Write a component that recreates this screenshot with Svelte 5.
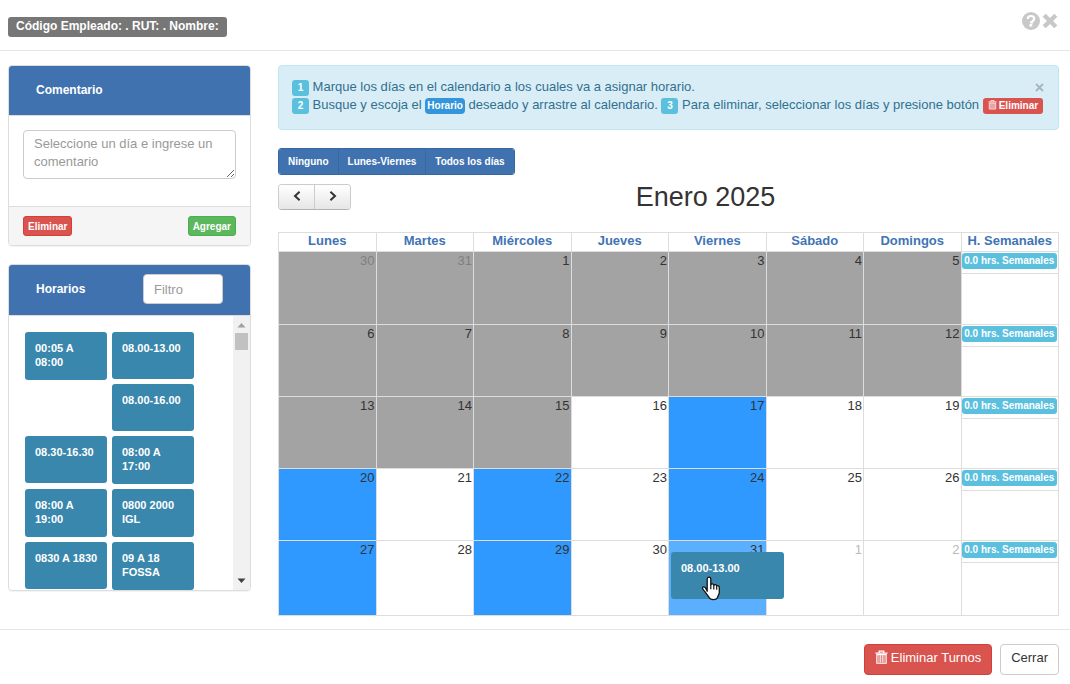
<script>
  const shifts = [
    '00:05 A 08:00', '08.00-13.00', '08.00-16.00', '08.30-16.30', '08:00 A 17:00',
    '08:00 A 19:00', '0800 2000 IGL', '0830 A 1830', '09 A 18 FOSSA'
  ];
  const dayNames = ['Lunes', 'Martes', 'Miércoles', 'Jueves', 'Viernes', 'Sábado', 'Domingos', 'H. Semanales'];
  const selected = [17, 20, 22, 24, 27, 29, 31];

  const weeks = Array.from({ length: 5 }, (_, w) =>
    Array.from({ length: 7 }, (_, d) => {
      const n = w * 7 + d - 1;
      const day = n < 1 ? n + 31 : n > 31 ? n - 31 : n;
      const outside = n < 1 || n > 31;
      return {
        day,
        outside,
        past: n < 16,
        selected: !outside && selected.includes(day),
        target: !outside && day === 31
      };
    })
  );
</script>

{#snippet trash()}
  <svg class="trash" viewBox="0 0 14 15" aria-hidden="true">
    <path d="M4.5 2V.7h5V2M.5 2.7h13M2 4.5h10v9.2H2z" fill="none" stroke="currentColor" stroke-width="1.3" />
    <path d="M4.3 5v8M6.1 5v8M7.9 5v8M9.7 5v8" stroke="currentColor" stroke-width="1" />
  </svg>
{/snippet}

<div class="modal">
  <header class="top">
    <span class="employee">Código Empleado: . RUT: . Nombre:</span>
    <div class="tools">
      <button class="plain" aria-label="Ayuda">
        <svg width="18" height="18" viewBox="0 0 18 18">
          <circle cx="9" cy="9" r="9" fill="#c8c8c8" />
          <path d="M5.8 6.9C5.8 4.8 7.2 4 9 4s3.2 1 3.2 2.7c0 2-2.2 1.9-2.2 3.6H8.1" fill="none" stroke="#fff" stroke-width="2.2" />
          <rect x="7.5" y="12" width="2.8" height="2.6" fill="#fff" />
        </svg>
      </button>
      <button class="plain" aria-label="Cerrar ventana">
        <svg width="16" height="16" viewBox="0 0 16 16">
          <path d="M2.2 2.2l11.6 11.6M13.8 2.2L2.2 13.8" stroke="#c8c8c8" stroke-width="4.4" />
        </svg>
      </button>
    </div>
  </header>

  <main class="content">
    <aside>
      <section class="panel">
        <div class="panel-head"><label for="comment">Comentario</label></div>
        <div class="comment-body">
          <textarea id="comment" placeholder="Seleccione un día e ingrese un comentario"></textarea>
        </div>
        <div class="panel-foot">
          <button class="small danger">Eliminar</button>
          <button class="small success">Agregar</button>
        </div>
      </section>

      <section class="panel">
        <div class="panel-head with-filter">
          <label for="filter">Horarios</label>
          <input id="filter" type="text" placeholder="Filtro" />
        </div>
        <div class="shift-body">
          <div class="shifts">
            {#each shifts as shift}
              <div class="shift">{shift}</div>
            {/each}
          </div>
          <div class="scroll" aria-hidden="true">
            <svg width="9" height="5" viewBox="0 0 9 5"><path d="M4.5 0L8.5 4.5h-8z" fill="#a0a0a0" /></svg>
            <div class="thumb"></div>
            <svg width="9" height="5" viewBox="0 0 9 5"><path d="M4.5 5L8.5 .5h-8z" fill="#404040" /></svg>
          </div>
        </div>
      </section>
    </aside>

    <section class="schedule">
      <div class="alert">
        <div class="step">
          <span><span class="tag num">1</span> Marque los días en el calendario a los cuales va a asignar horario.</span>
          <button class="plain" aria-label="Cerrar aviso">
            <svg width="9" height="9" viewBox="0 0 9 9"><path d="M1 1l7 7M8 1L1 8" stroke="#a5b6be" stroke-width="1.8" /></svg>
          </button>
        </div>
        <div>
          <span class="tag num">2</span> Busque y escoja el <span class="tag word">Horario</span> deseado y arrastre al calendario.
          <span class="tag num">3</span> Para eliminar, seleccionar los días y presione botón
          <span class="tag remove">{@render trash()}Eliminar</span>
        </div>
      </div>

      <div class="group">
        <button>Ninguno</button>
        <button>Lunes-Viernes</button>
        <button>Todos los días</button>
      </div>

      <div class="calendar-bar">
        <div class="nav">
          <button aria-label="Mes anterior">
            <svg width="8" height="10" viewBox="0 0 8 10"><path d="M6.6 .8L2 5l4.6 4.2" fill="none" stroke="#333" stroke-width="2" /></svg>
          </button>
          <button aria-label="Mes siguiente">
            <svg width="8" height="10" viewBox="0 0 8 10"><path d="M1.4 .8L6 5 1.4 9.2" fill="none" stroke="#333" stroke-width="2" /></svg>
          </button>
        </div>
        <h2>Enero 2025</h2>
        <span></span>
      </div>

      <table>
        <thead>
          <tr>{#each dayNames as name}<th>{name}</th>{/each}</tr>
        </thead>
        <tbody>
          {#each weeks as week}
            <tr>
              {#each week as c}
                <td class:past={c.past} class:outside={c.outside} class:selected={c.selected} class:target={c.target}>
                  {c.day}
                  {#if c.target}
                    <div class="shift dragged">
                      08.00-13.00
                      <svg class="pointer" width="20" height="25" viewBox="0 0 20 25" aria-hidden="true">
                        <path
                          d="M6.2 15.2V3.2c0-2.8 3.6-2.8 3.6 0v5.6c.6-1.4 2.9-1.1 3 .5.7-1.1 2.7-.8 2.9.8.8-.8 2.6-.3 2.6 1.3v4.8c0 2.4-1.6 3.6-1.8 5.2-.8 2.8-7.2 2.8-8.4.2-1-2.1-2.9-4-4.6-6.4-.6-1-2.1-2.1-2.1-3.1.2-1.6 2-1.6 3-.5z"
                          fill="#fff" stroke="#111" stroke-width="1.3" stroke-linejoin="round" />
                        <path d="M9.8 8.8v4.4M12.8 9.4v4M15.7 10.2v3.6" stroke="#111" stroke-width="1.2" />
                      </svg>
                    </div>
                  {/if}
                </td>
              {/each}
              <td class="total"><div><span class="tag hours">0.0 hrs. Semanales</span></div></td>
            </tr>
          {/each}
        </tbody>
      </table>
    </section>
  </main>

  <footer>
    <button class="large danger">{@render trash()}Eliminar Turnos</button>
    <button class="large default">Cerrar</button>
  </footer>
</div>

<style>
  :global(body) {
    background: #fff;
  }
  .modal,
  .modal :is(button, input, textarea) {
    font-family: 'Liberation Sans', Arial, sans-serif;
  }
  .modal {
    font-size: 13px;
    line-height: 18px;
    color: #333;
  }
  .modal * {
    box-sizing: border-box;
  }
  button {
    margin: 0;
    cursor: pointer;
  }
  .plain {
    display: flex;
    padding: 0;
    border: 0;
    background: none;
  }
  .top {
    display: flex;
    justify-content: space-between;
    align-items: flex-start;
    height: 51px;
    padding: 12px 12px 0 8px;
    border-bottom: 1px solid #e5e5e5;
  }
  .employee {
    margin-top: 5px;
    padding: 0 8px 2px;
    border-radius: 3px;
    background: #777;
    color: #fff;
    font-size: 12px;
    font-weight: bold;
  }
  .tools {
    display: flex;
    align-items: center;
    gap: 2px;
  }
  .content {
    display: grid;
    grid-template-columns: 243px minmax(0, 1fr);
    gap: 27px;
    padding: 14px 11px 13px 8px;
  }
  .panel {
    margin-bottom: 18px;
    border: 1px solid #ddd;
    border-radius: 4px;
    overflow: hidden;
    box-shadow: 0 1px 1px rgba(0, 0, 0, 0.05);
  }
  .panel:last-child {
    margin-bottom: 0;
  }
  .panel-head {
    display: flex;
    justify-content: space-between;
    align-items: center;
    height: 50px;
    padding: 0 27px 2px;
    border-bottom: 1px solid #ddd;
    background: #4072b0;
    color: #fff;
    font-size: 12px;
    font-weight: bold;
  }
  .with-filter {
    height: 51px;
  }
  input,
  textarea {
    border: 1px solid #ccc;
    border-radius: 4px;
    padding: 4px 10px;
    font-size: 13px;
    line-height: 18px;
    color: #555;
  }
  ::placeholder {
    color: #999;
    opacity: 1;
  }
  input {
    width: 80px;
    height: 30px;
  }
  .comment-body {
    height: 90px;
    padding: 14px;
  }
  textarea {
    display: block;
    width: 100%;
    height: 49px;
    resize: vertical;
    overflow: hidden;
  }
  .panel-foot {
    display: flex;
    justify-content: space-between;
    padding: 9px 14px;
    border-top: 1px solid #ddd;
    background: #f5f5f5;
  }
  .small {
    height: 20px;
    padding: 0 4px;
    border: 1px solid;
    border-radius: 3px;
    color: #fff;
    font-size: 10px;
    font-weight: bold;
  }
  .danger {
    background: #d9534f;
    border-color: #d43f3a;
    color: #fff;
  }
  .success {
    background: #5cb85c;
    border-color: #4cae4c;
  }
  .shift-body {
    display: flex;
    height: 274px;
  }
  .shifts {
    flex: 1;
    padding: 16px 16px 0;
    overflow: hidden;
  }
  .shift {
    float: left;
    width: 82px;
    min-height: 47px;
    margin: 0 5px 5px 0;
    padding: 9px 8px 11px 10px;
    border-radius: 3px;
    background: #3a87ad;
    color: #fff;
    font-size: 11px;
    font-weight: bold;
    line-height: 14px;
    cursor: pointer;
  }
  .scroll {
    display: flex;
    flex-direction: column;
    align-items: center;
    width: 17px;
    padding: 7px 0;
    background: #f1f1f1;
  }
  .thumb {
    width: 13px;
    height: 17px;
    margin: 5px 0 auto;
    background: #c1c1c1;
  }
  .schedule {
    min-width: 0;
  }
  .alert {
    height: 65px;
    padding: 12px 14px 0 13px;
    border: 1px solid #bce8f1;
    border-radius: 4px;
    background: #d9edf7;
    color: #31708f;
    white-space: nowrap;
  }
  .step {
    display: flex;
    justify-content: space-between;
    align-items: center;
  }
  .tag {
    display: inline-block;
    height: 16px;
    border-radius: 3px;
    background: #5bc0de;
    color: #fff;
    font-size: 10px;
    font-weight: bold;
    line-height: 16px;
    text-align: center;
    vertical-align: middle;
  }
  .num {
    width: 17px;
  }
  .word {
    padding: 0 2px;
    border-radius: 4px;
    background: #3395db;
  }
  .remove {
    padding: 0 5px;
    background: #d9534f;
  }
  .remove .trash {
    width: 9px;
    height: 10px;
    margin-right: 2px;
    vertical-align: -1px;
  }
  .group {
    display: flex;
    width: fit-content;
    margin: 18px 0 9px;
    border: 1px solid #35699f;
    border-radius: 3px;
    overflow: hidden;
  }
  .group button {
    height: 25px;
    padding: 0 9px;
    border: 0;
    background: #4072b0;
    color: #fff;
    font-size: 10px;
    font-weight: bold;
  }
  .group button + button {
    border-left: 1px solid #35699f;
  }
  .calendar-bar {
    display: grid;
    grid-template-columns: 1fr auto 1fr;
    margin-bottom: 22px;
    height: 26px;
  }
  .nav {
    display: flex;
    justify-self: start;
    width: 73px;
    border: 1px solid #ccc;
    border-bottom-color: #b3b3b3;
    border-radius: 4px;
    overflow: hidden;
  }
  .nav button {
    display: flex;
    flex: 1;
    align-items: center;
    justify-content: center;
    padding: 0 0 2px;
    border: 0;
    background: linear-gradient(#fff, #e6e6e6);
  }
  .nav button + button {
    border-left: 1px solid #ccc;
  }
  h2 {
    margin: 0;
    padding-left: 74px;
    font-size: 27px;
    font-weight: normal;
    line-height: 26px;
  }
  table {
    width: 100%;
    border-collapse: collapse;
    table-layout: fixed;
  }
  th,
  td {
    border: 1px solid #ddd;
    vertical-align: top;
  }
  th {
    height: 19px;
    padding: 0;
    color: #3f74b5;
    font-size: 13px;
    line-height: 16px;
  }
  td {
    height: 72px;
    padding: 0 1px;
    text-align: right;
  }
  tr:first-child td {
    height: 73px;
  }
  tr:last-child td {
    height: 75px;
  }
  .outside {
    color: #b9b9b9;
  }
  .past {
    background: #a3a3a3;
  }
  .past.outside {
    color: #808080;
  }
  .selected {
    background: #3099ff;
  }
  .target {
    position: relative;
    background: #5ab0ff;
  }
  .dragged {
    position: absolute;
    z-index: 1;
    top: 11px;
    left: 2px;
    width: 113px;
    margin: 0;
    text-align: left;
  }
  .pointer {
    position: absolute;
    top: 24px;
    left: 30px;
  }
  .total {
    padding: 0;
  }
  .total div {
    height: 22px;
    padding-top: 1px;
    border-bottom: 1px solid #ddd;
    line-height: 16px;
  }
  .hours {
    display: block;
    margin-right: 1px;
  }
  footer {
    display: flex;
    justify-content: flex-end;
    gap: 8px;
    padding: 14px 11px 9px;
    border-top: 1px solid #e5e5e5;
  }
  .large {
    display: flex;
    align-items: center;
    height: 31px;
    padding: 0 10px 4px;
    border: 1px solid #d43f3a;
    border-radius: 4px;
    font-size: 13px;
  }
  .large .trash {
    width: 13px;
    height: 15px;
    margin-right: 3px;
  }
  .default {
    border-color: #ccc;
    background: #fff;
    color: #333;
  }
</style>
